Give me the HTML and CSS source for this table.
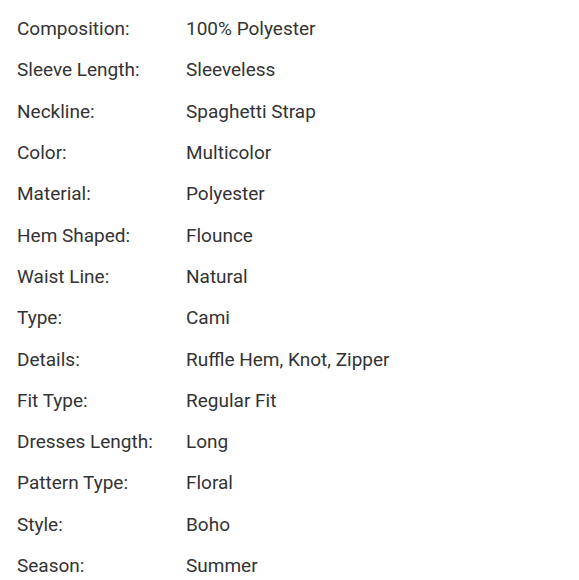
FILE: index.html
```html
<!DOCTYPE html>
<html>
<head>
<meta charset="utf-8">
<link rel="stylesheet" href="styles.css">
</head>
<body>
<div class="specs">
  <div class="row"><span class="label">Composition:</span><span class="value">100% Polyester</span></div>
  <div class="row"><span class="label">Sleeve Length:</span><span class="value">Sleeveless</span></div>
  <div class="row"><span class="label">Neckline:</span><span class="value">Spaghetti Strap</span></div>
  <div class="row"><span class="label">Color:</span><span class="value">Multicolor</span></div>
  <div class="row"><span class="label">Material:</span><span class="value">Polyester</span></div>
  <div class="row"><span class="label">Hem Shaped:</span><span class="value">Flounce</span></div>
  <div class="row"><span class="label">Waist Line:</span><span class="value">Natural</span></div>
  <div class="row"><span class="label">Type:</span><span class="value">Cami</span></div>
  <div class="row"><span class="label">Details:</span><span class="value">Ruffle Hem, Knot, Zipper</span></div>
  <div class="row"><span class="label">Fit Type:</span><span class="value">Regular Fit</span></div>
  <div class="row"><span class="label">Dresses Length:</span><span class="value">Long</span></div>
  <div class="row"><span class="label">Pattern Type:</span><span class="value">Floral</span></div>
  <div class="row"><span class="label">Style:</span><span class="value">Boho</span></div>
  <div class="row"><span class="label">Season:</span><span class="value">Summer</span></div>
</div>
</body>
</html>
```
FILE: styles.css
```css
html, body {
  margin: 0;
  padding: 0;
  background: #fff;
}
.specs {
  padding: 8px 0 0 17px;
  font-family: Roboto, "Noto Sans", sans-serif;
  font-size: 19px;
  color: #333;
}
.row {
  display: flex;
  height: 41.3px;
  align-items: center;
}
.label {
  width: 169px;
  flex: none;
}
```
